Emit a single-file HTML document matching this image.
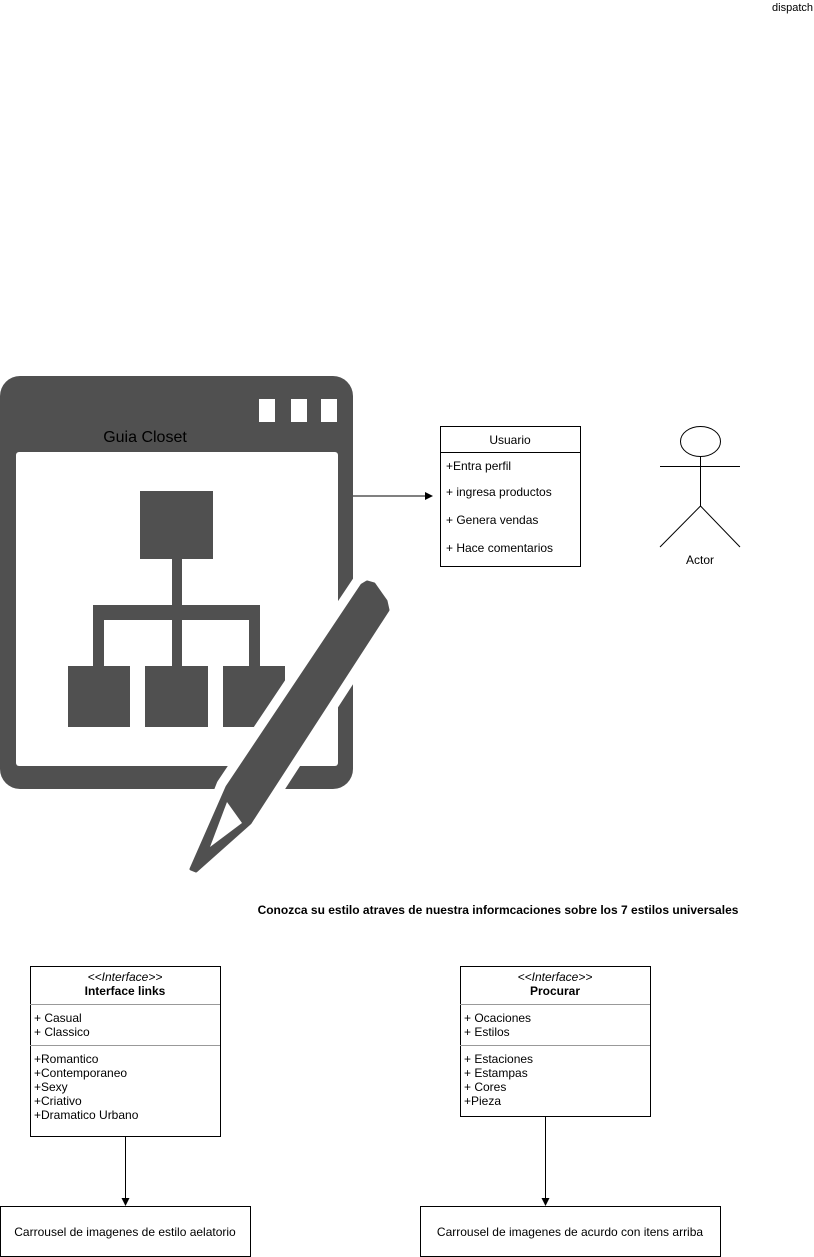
<!DOCTYPE html>
<html><head><meta charset="utf-8"><style>
html,body{margin:0;padding:0;background:#fff;width:814px;height:1257px;overflow:hidden}
svg{display:block}
text{font-family:"Liberation Sans",sans-serif;font-size:12px;fill:#000}
</style></head><body>
<svg width="814" height="1257" viewBox="0 0 814 1257" xmlns="http://www.w3.org/2000/svg">
<text x="813" y="11" font-size="11" text-anchor="end" style="font-size:11px">dispatch</text>

<!-- window icon -->
<rect x="0" y="376" width="353" height="413" rx="20" fill="#505050"/>
<rect x="16" y="452" width="322" height="314" rx="3" fill="#fff"/>
<rect x="259" y="399" width="16" height="23" fill="#fff"/>
<rect x="291" y="399" width="16" height="23" fill="#fff"/>
<rect x="321" y="399" width="16" height="23" fill="#fff"/>
<text x="145" y="442" text-anchor="middle" style="font-size:16px">Guia Closet</text>
<!-- tree -->
<g fill="#505050">
<rect x="140" y="491" width="73" height="68"/>
<rect x="172" y="559" width="10" height="50"/>
<rect x="93" y="605" width="167" height="15"/>
<rect x="93" y="605" width="11" height="62"/>
<rect x="172" y="605" width="10" height="62"/>
<rect x="249" y="605" width="11" height="62"/>
<rect x="68" y="666" width="62" height="61"/>
<rect x="145" y="666" width="63" height="61"/>
<rect x="223" y="666" width="62" height="61"/>
</g>
<!-- pencil -->
<polygon points="362,585 388,610 250,823 193,873 227,787" fill="#fff" stroke="#fff" stroke-width="22" stroke-linejoin="round"/>
<polygon points="362,585 367,582 374,584 386,601 388,610 250,823 196,871 191,869 227,787" fill="#505050" stroke="#505050" stroke-width="3" stroke-linejoin="round"/>
<polygon points="227,802 242,823 210,847" fill="#fff"/>

<!-- arrow -->
<line x1="353" y1="496" x2="427" y2="496" stroke="#000"/>
<polygon points="433,496 425,492 425,500" fill="#000"/>

<!-- Usuario -->
<rect x="440.5" y="426.5" width="140" height="140" fill="#fff" stroke="#000"/>
<line x1="440" y1="452.5" x2="580" y2="452.5" stroke="#000"/>
<text x="510" y="444" text-anchor="middle">Usuario</text>
<text x="446" y="470">+Entra perfil</text>
<text x="446" y="496">+ ingresa productos</text>
<text x="446" y="524">+ Genera vendas</text>
<text x="446" y="552">+ Hace comentarios</text>

<!-- actor -->
<g stroke="#000" fill="none">
<ellipse cx="700.5" cy="441.5" rx="20" ry="15" fill="#fff"/>
<line x1="700.5" y1="456" x2="700.5" y2="506"/>
<line x1="660" y1="466.5" x2="740" y2="466.5"/>
<line x1="700.5" y1="506" x2="660" y2="547"/>
<line x1="700.5" y1="506" x2="740" y2="547"/>
</g>
<text x="700" y="564" text-anchor="middle">Actor</text>

<text x="498" y="914" text-anchor="middle" font-weight="bold">Conozca su estilo atraves de nuestra informcaciones sobre los 7 estilos universales</text>

<!-- interface links -->
<rect x="30.5" y="966.5" width="190" height="170" fill="#fff" stroke="#000"/>
<line x1="30" y1="1004.5" x2="220" y2="1004.5" stroke="#999"/>
<line x1="30" y1="1045.5" x2="220" y2="1045.5" stroke="#999"/>
<text x="125" y="981" text-anchor="middle" font-style="italic">&lt;&lt;Interface&gt;&gt;</text>
<text x="125" y="995" text-anchor="middle" font-weight="bold">Interface links</text>
<text x="34" y="1022">+ Casual</text>
<text x="34" y="1036">+ Classico</text>
<text x="34" y="1063">+Romantico</text>
<text x="34" y="1077">+Contemporaneo</text>
<text x="34" y="1091">+Sexy</text>
<text x="34" y="1105">+Criativo</text>
<text x="34" y="1119">+Dramatico Urbano</text>

<!-- procurar -->
<rect x="460.5" y="966.5" width="190" height="150" fill="#fff" stroke="#000"/>
<line x1="460" y1="1004.5" x2="650" y2="1004.5" stroke="#999"/>
<line x1="460" y1="1045.5" x2="650" y2="1045.5" stroke="#999"/>
<text x="555" y="981" text-anchor="middle" font-style="italic">&lt;&lt;Interface&gt;&gt;</text>
<text x="555" y="995" text-anchor="middle" font-weight="bold">Procurar</text>
<text x="464" y="1022">+ Ocaciones</text>
<text x="464" y="1036">+ Estilos</text>
<text x="464" y="1063">+ Estaciones</text>
<text x="464" y="1077">+ Estampas</text>
<text x="464" y="1091">+ Cores</text>
<text x="464" y="1105">+Pieza</text>

<!-- arrows down -->
<line x1="125.5" y1="1137" x2="125.5" y2="1200" stroke="#000"/>
<polygon points="125.5,1206 121.5,1198 129.5,1198" fill="#000"/>
<line x1="545.5" y1="1117" x2="545.5" y2="1200" stroke="#000"/>
<polygon points="545.5,1206 541.5,1198 549.5,1198" fill="#000"/>

<rect x="0.5" y="1206.5" width="250" height="50" fill="#fff" stroke="#000"/>
<text x="125" y="1236" text-anchor="middle">Carrousel de imagenes de estilo aelatorio</text>
<rect x="420.5" y="1206.5" width="300" height="50" fill="#fff" stroke="#000"/>
<text x="570" y="1236" text-anchor="middle">Carrousel de imagenes de acurdo con itens arriba</text>
</svg>
</body></html>
